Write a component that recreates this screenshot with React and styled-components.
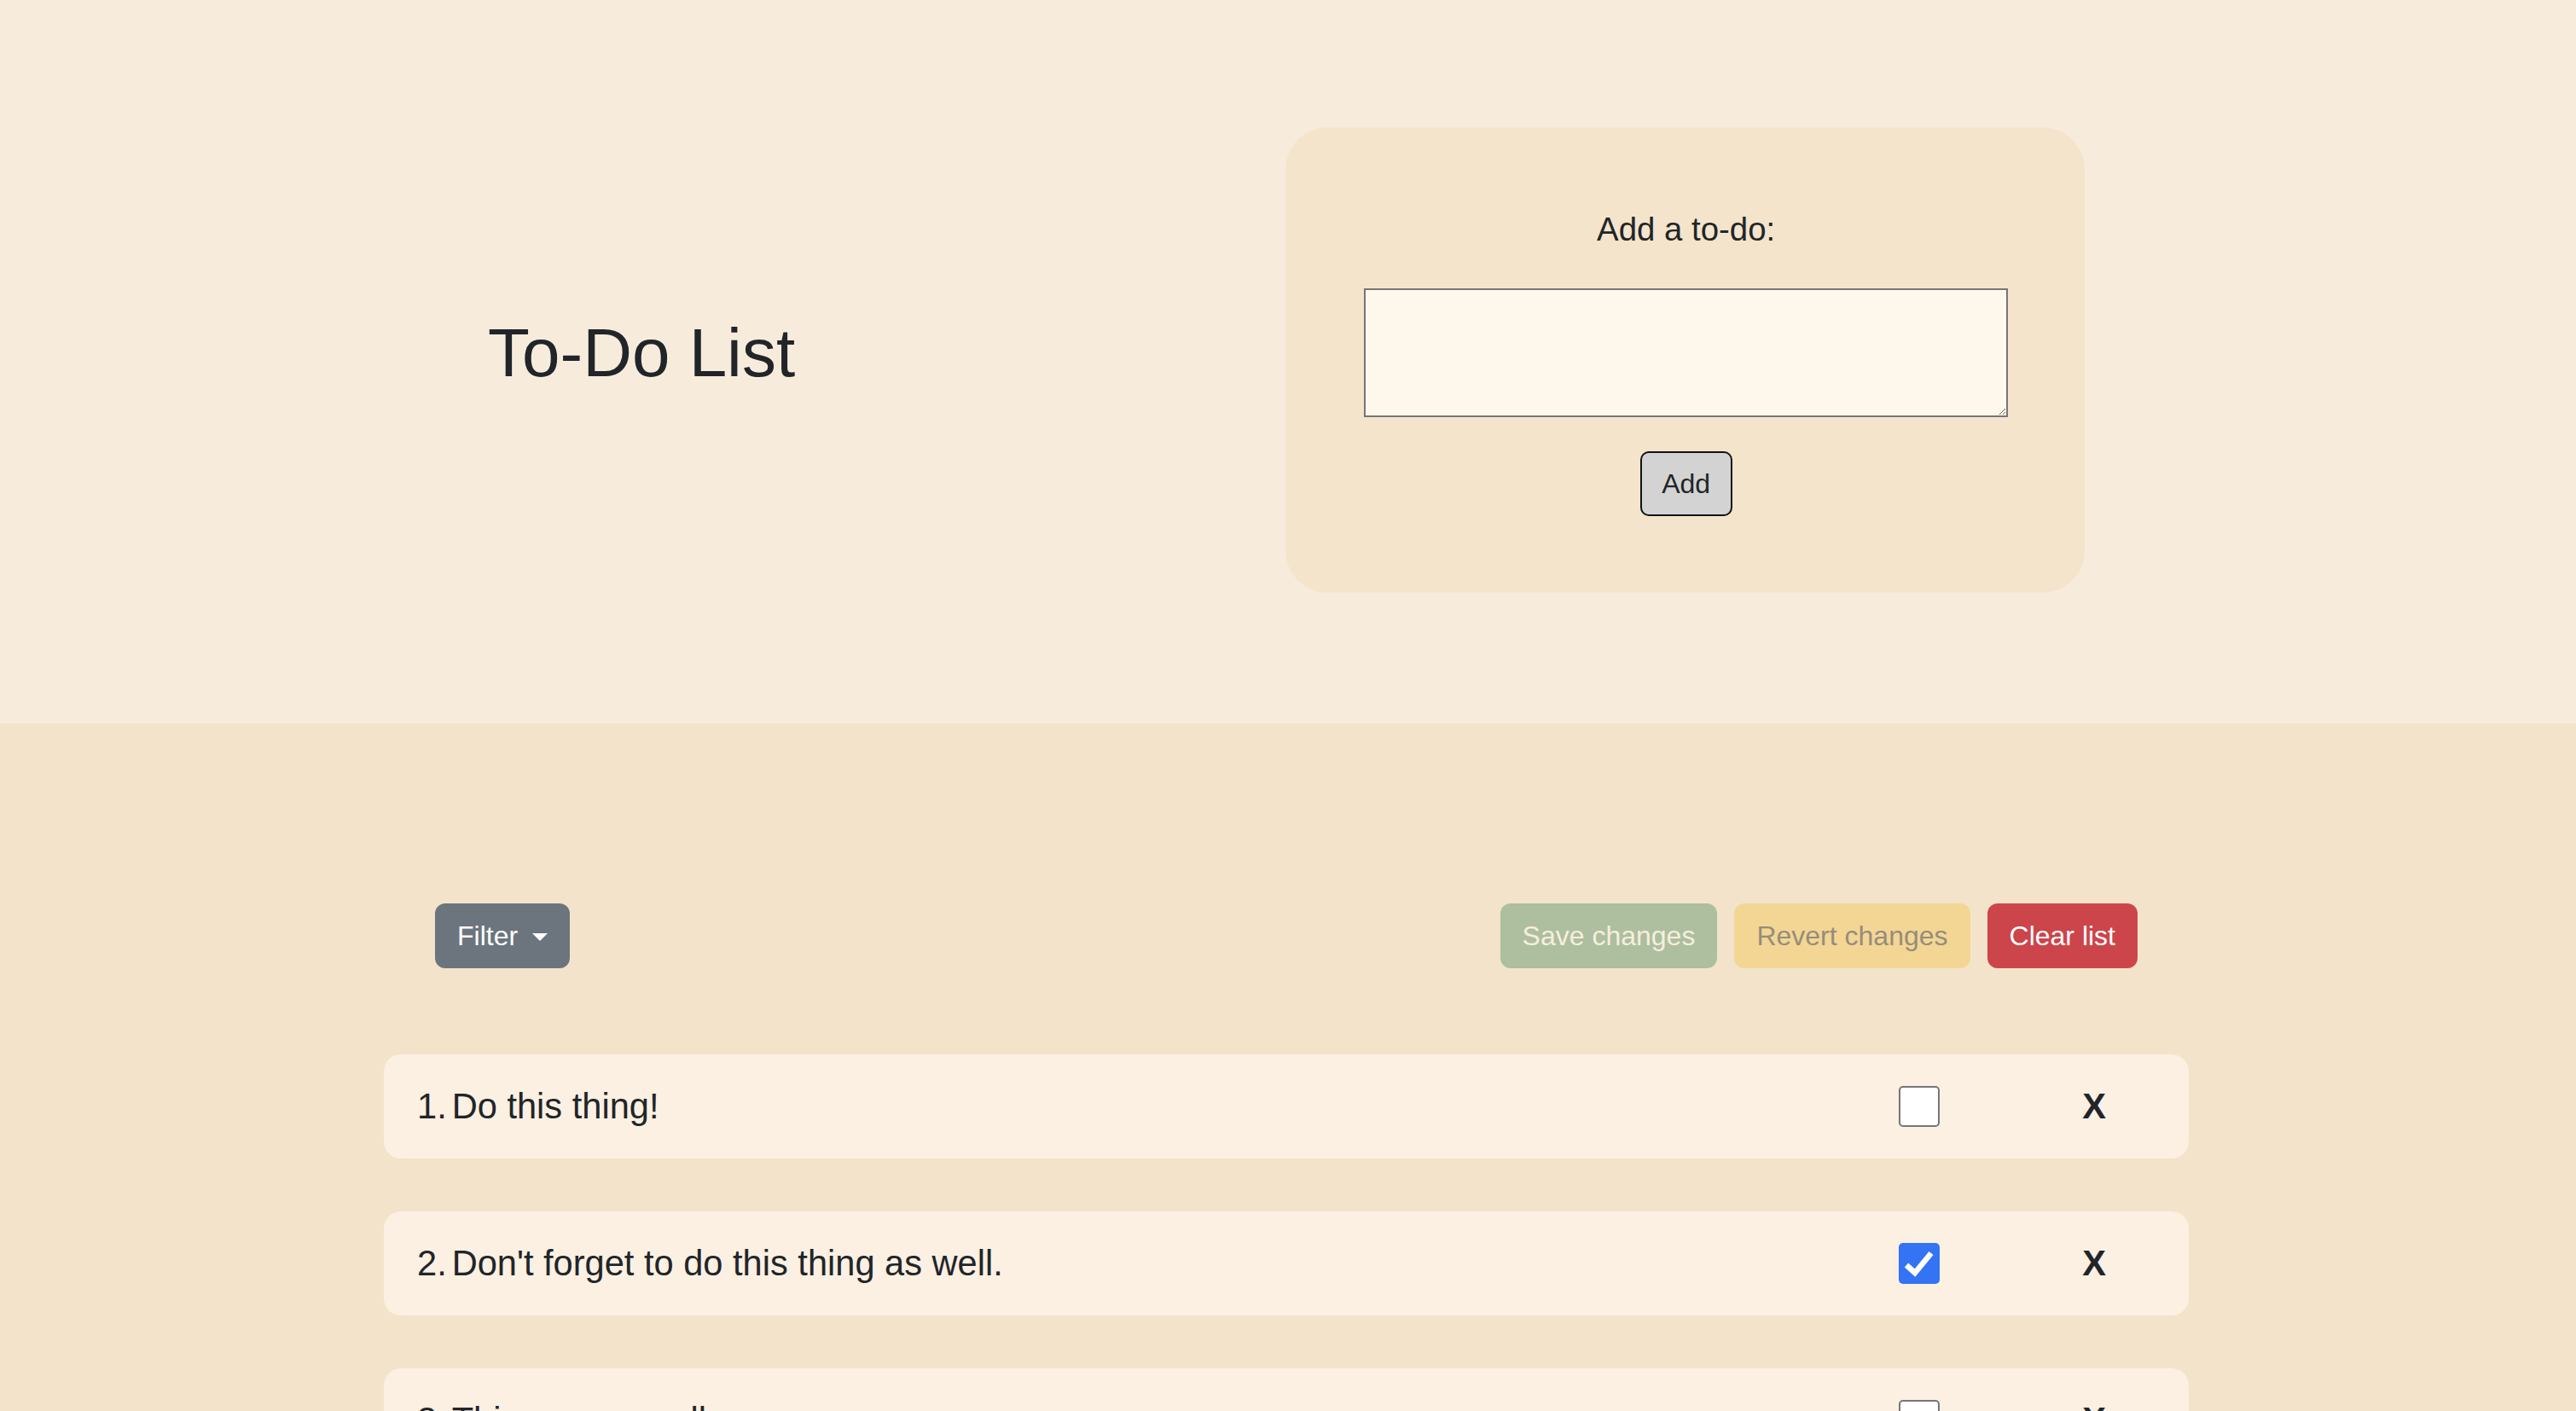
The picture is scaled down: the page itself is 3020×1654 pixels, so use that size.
import React, { useState } from "react";
import styled, { createGlobalStyle } from "styled-components";

const Global = createGlobalStyle`
  html, body { margin: 0; padding: 0; overflow: hidden; }
  body {
    font-family: "Liberation Sans", Arial, Helvetica, sans-serif;
    color: #212529;
    background: #f3e3ca;
  }
  * { box-sizing: border-box; }
`;

const Page = styled.div`
  min-height: 100vh;
  background: #f3e3ca;
`;

const Header = styled.header`
  display: flex;
  align-items: center;
  gap: 575px;
  padding: 149px 0 153px 572px;
  background: #f7ecdc;
`;

const Title = styled.h1`
  margin: 0 0 16px;
  font-size: 80px;
  font-weight: 400;
  line-height: 1.2;
  color: #212529;
`;

const Card = styled.section`
  width: 937px;
  padding: 98px 90px 90px 92px;
  background: #f4e4cb;
  border-radius: 50px;
  display: flex;
  flex-direction: column;
  align-items: center;
`;

const Label = styled.label`
  font-size: 38.4px;
  line-height: 44px;
  color: #212529;
`;

const TextArea = styled.textarea`
  display: block;
  margin-top: 47px;
  width: 100%;
  height: 151px;
  border: 2px solid #767676;
  background: #fef8ec;
  font: inherit;
  font-size: 32px;
  outline: none;
`;

const AddButton = styled.button`
  margin-top: 40px;
  width: 108px;
  height: 76px;
  padding: 0;
  font-family: inherit;
  font-size: 32px;
  color: #212529;
  background: #d3d3d3;
  border: 2px solid #111;
  border-radius: 10px;
`;

const Main = styled.main`
  padding-top: 211px;
`;

const ListWrap = styled.div`
  width: 2116px;
  margin-left: 450px;
`;

const Toolbar = styled.div`
  display: flex;
  justify-content: space-between;
  align-items: center;
  padding: 0 60px;
  margin-bottom: 101px;
`;

const ButtonGroup = styled.div`
  display: flex;
  gap: 20px;
`;

const Btn = styled.button`
  display: inline-flex;
  align-items: center;
  height: 76px;
  padding: 12px 24px;
  font-family: inherit;
  font-size: 32px;
  line-height: 48px;
  color: ${(p) => p.$fg};
  background: ${(p) => p.$bg};
  border: 2px solid transparent;
  border-radius: 12px;
  white-space: nowrap;
`;

const Caret = styled.span`
  display: inline-block;
  margin-left: 17px;
  width: 0;
  height: 0;
  border-top: 9.6px solid #fff;
  border-left: 9.6px solid transparent;
  border-right: 9.6px solid transparent;
  transform: translateY(1px);
`;

const Items = styled.ol`
  list-style: none;
  margin: 0;
  padding: 0;
  display: flex;
  flex-direction: column;
  gap: 62px;
`;

const Item = styled.li`
  height: 122px;
  display: flex;
  align-items: center;
  padding: 0 97px 0 39px;
  background: #fcf0e2;
  border-radius: 20px;
`;

const ItemText = styled.span`
  flex: 1;
  font-size: 41.6px;
  color: #212529;
  white-space: nowrap;
`;

const Num = styled.span`
  margin-right: 6px;
`;

const Check = styled.span`
  width: 48px;
  height: 48px;
  margin-right: 167px;
  border-radius: 5px;
  display: flex;
  align-items: center;
  justify-content: center;
  background: ${(p) => (p.$checked ? "#3474f4" : "#ffffff")};
  border: ${(p) => (p.$checked ? "none" : "2px solid #767676")};
  flex-shrink: 0;
`;

const Remove = styled.button`
  padding: 0;
  border: none;
  background: none;
  font-family: inherit;
  font-size: 41.6px;
  font-weight: 700;
  line-height: 1;
  color: #212529;
`;

const todos = [
  { text: "Do this thing!", done: false },
  { text: "Don't forget to do this thing as well.", done: true },
  { text: "This one as well.", done: false },
];

export default function App() {
  const [items, setItems] = useState(todos);
  const toggle = (i) =>
    setItems((list) => list.map((t, j) => (j === i ? { ...t, done: !t.done } : t)));

  return (
    <Page>
      <Global />
      <Header>
        <Title>To-Do List</Title>
        <Card>
          <Label htmlFor="todo">Add a to-do:</Label>
          <TextArea id="todo" />
          <AddButton>Add</AddButton>
        </Card>
      </Header>
      <Main>
        <ListWrap>
          <Toolbar>
            <Btn $bg="#6c757d" $fg="#ffffff">
              Filter
              <Caret />
            </Btn>
            <ButtonGroup>
              <Btn $bg="#adbf9f" $fg="#f7eedd">Save changes</Btn>
              <Btn $bg="#f3d693" $fg="#958d7d">Revert changes</Btn>
              <Btn $bg="#cc454b" $fg="#ffffff">Clear list</Btn>
            </ButtonGroup>
          </Toolbar>
          <Items>
            {items.map((t, i) => (
              <Item key={i}>
                <ItemText>
                  <Num>{i + 1}.</Num>
                  {t.text}
                </ItemText>
                <Check $checked={t.done} onClick={() => toggle(i)}>
                  {t.done && (
                    <svg width="48" height="48" viewBox="0 0 48 48">
                      <polyline
                        points="9,26 19,35 38,12"
                        fill="none"
                        stroke="#fff"
                        strokeWidth="6.5"
                      />
                    </svg>
                  )}
                </Check>
                <Remove>X</Remove>
              </Item>
            ))}
          </Items>
        </ListWrap>
      </Main>
    </Page>
  );
}
